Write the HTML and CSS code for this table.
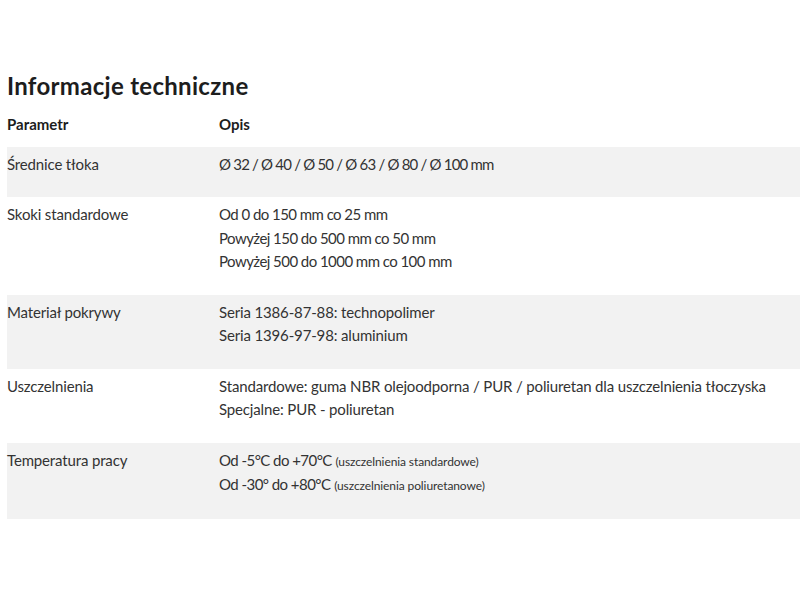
FILE: index.html
```html
<!DOCTYPE html>
<html lang="pl">
<head>
<meta charset="utf-8">
<link rel="stylesheet" href="styles.css">
</head>
<body>
<section class="tech">
  <h2 class="tech__title">Informacje techniczne</h2>
  <div class="tech__table">
    <div class="row row--head">
      <div class="cell cell--param">Parametr</div>
      <div class="cell cell--desc">Opis</div>
    </div>
    <div class="row row--shade">
      <div class="cell cell--param">Średnice tłoka</div>
      <div class="cell cell--desc"><p class="num dia">Ø 32 / Ø 40 / Ø 50 / Ø 63 / Ø 80 / Ø 100 mm</p></div>
    </div>
    <div class="row">
      <div class="cell cell--param">Skoki standardowe</div>
      <div class="cell cell--desc"><p class="num">Od 0 do 150 mm co 25 mm<br>Powyżej 150 do 500 mm co 50 mm<br>Powyżej 500 do 1000 mm co 100 mm</p></div>
    </div>
    <div class="row row--shade">
      <div class="cell cell--param">Materiał pokrywy</div>
      <div class="cell cell--desc"><p>Seria 1386-87-88: technopolimer<br>Seria 1396-97-98: aluminium</p></div>
    </div>
    <div class="row">
      <div class="cell cell--param">Uszczelnienia</div>
      <div class="cell cell--desc"><p>Standardowe: guma NBR olejoodporna / PUR / poliuretan dla uszczelnienia tłoczyska<br>Specjalne: PUR - poliuretan</p></div>
    </div>
    <div class="row row--shade">
      <div class="cell cell--param">Temperatura pracy</div>
      <div class="cell cell--desc"><p><span class="num">Od -5°C do +70°C</span> <small>(uszczelnienia standardowe)</small><br><span class="num">Od -30° do +80°C</span> <small>(uszczelnienia poliuretanowe)</small></p></div>
    </div>
  </div>
</section>
</body>
</html>
```
FILE: styles.css
```css
html, body {
  margin: 0;
  padding: 0;
  background: #ffffff;
}
body {
  font-family: Lato, "Noto Sans", sans-serif;
  color: #333333;
  overflow: hidden;
}
.tech {
  padding: 70px 0 0 7px;
}
.tech__title {
  margin: 0;
  font-size: 24px;
  line-height: 32px;
  font-weight: 700;
  letter-spacing: 0.3px;
  color: #1d1d1d;
}
.tech__table {
  margin-top: 7px;
  width: 810px;
}
.row {
  display: flex;
}
.row--shade {
  background: #f2f2f2;
}
.cell {
  font-size: 15px;
  line-height: 23.5px;
  letter-spacing: -0.15px;
}
.cell--param {
  width: 212px;
  flex: none;
  padding-top: 6px;
}
.cell--desc {
  flex: 1;
  padding-top: 6px;
}
.cell p {
  margin: 0 0 21px;
}
.num {
  letter-spacing: -0.55px;
}
.dia {
  letter-spacing: -0.8px;
}
.row--head .cell {
  font-weight: 700;
  color: #1d1d1d;
  letter-spacing: 0;
  padding-top: 4px;
  padding-bottom: 10px;
}
small {
  font-size: 12px;
  letter-spacing: -0.1px;
}
```
